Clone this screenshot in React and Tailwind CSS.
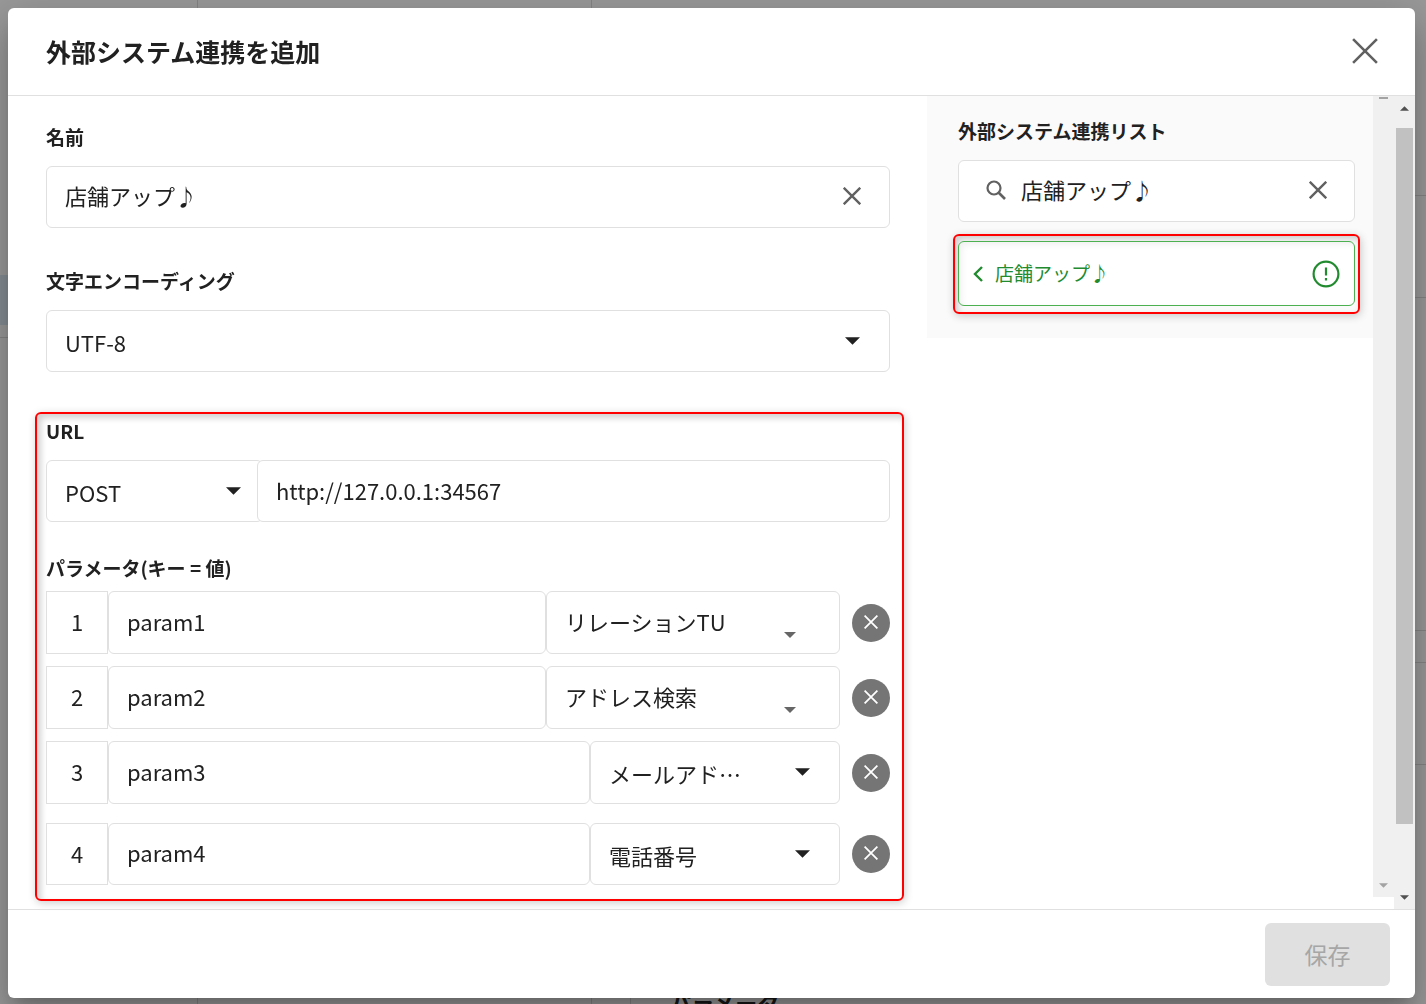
import { useState } from 'react';

const fieldClass =
  'h-[62px] w-full rounded-md border border-[#e0e0e0] bg-white px-[18px] text-[22px] text-[#212121] outline-none';

const initialParams = [
  { id: 1, name: 'param1', value: 'リレーションTU', wide: true },
  { id: 2, name: 'param2', value: 'アドレス検索', wide: true },
  { id: 3, name: 'param3', value: 'メールアド…', wide: false },
  { id: 4, name: 'param4', value: '電話番号', wide: false },
];

function CrossIcon({ className, strokeWidth = 2 }) {
  return (
    <svg viewBox="0 0 24 24" className={className} fill="none" stroke="currentColor" strokeWidth={strokeWidth}>
      <path d="M1 1L23 23M23 1L1 23" />
    </svg>
  );
}

function Caret({ className }) {
  return (
    <svg viewBox="0 0 14 7" className={className} fill="currentColor">
      <path d="M0 0H14L7 7Z" />
    </svg>
  );
}

function Label({ htmlFor, children }) {
  return (
    <label htmlFor={htmlFor} className="block text-[19px] leading-[26px] font-bold">
      {children}
    </label>
  );
}

function Backdrop() {
  return (
    <div className="fixed inset-0 overflow-hidden bg-[#999]" aria-hidden="true">
      <div className="absolute inset-y-0 left-[197px] w-px bg-[#848484]" />
      <div className="absolute inset-y-0 left-[591px] w-px bg-[#848484]" />
      <div className="absolute bottom-0 left-[630px] h-2 w-px bg-[#848484]" />
      <div className="absolute top-[275px] left-0 h-[50px] w-2 bg-[#858e94]" />
      <div className="absolute top-[337px] left-0 h-px w-2 bg-[#848484]" />
      <div className="absolute top-[195px] right-0 h-px w-3 bg-[#848484]" />
      <div className="absolute top-[297px] right-0 h-px w-3 bg-[#848484]" />
      <div className="absolute top-[630px] right-0 h-px w-3 bg-[#848484]" />
      <div className="absolute top-[662px] right-0 h-px w-3 bg-[#848484]" />
      <div className="absolute top-[764px] right-0 h-px w-3 bg-[#848484]" />
      <p className="absolute -bottom-3.5 left-[670px] text-[22px] leading-8 font-bold text-[#161616]">パラメータ</p>
    </div>
  );
}

function ParamRow({ param, onChange }) {
  const last = param.id === 4;
  return (
    <div className={`flex items-center ${last ? 'mt-[19px] h-[62px]' : 'h-[63px]'}`}>
      <div className="flex h-full w-[62px] shrink-0 items-center justify-center border border-[#e0e0e0] pb-0.5 text-[22px]">
        {param.id}
      </div>
      <input
        type="text"
        aria-label={`キー ${param.id}`}
        value={param.name}
        onChange={(e) => onChange(param.id, e.target.value)}
        className="h-full min-w-0 flex-1 rounded-md border border-[#e0e0e0] px-[18px] pb-1 text-[22px] outline-none"
      />
      <div className={`relative h-full shrink-0 ${param.wide ? 'w-[294px]' : 'w-[250px]'}`}>
        <select
          aria-label={`値 ${param.id}`}
          className={`h-full w-full appearance-none rounded-md border border-[#e0e0e0] bg-white px-[18px] text-[22px] outline-none ${param.wide ? 'pb-0.5' : 'pt-0.5'}`}
        >
          <option>{param.value}</option>
        </select>
        {param.wide ? (
          <Caret className="pointer-events-none absolute right-11 bottom-4 h-1.5 w-3 text-[#666]" />
        ) : (
          <Caret className="pointer-events-none absolute top-[27px] right-[30px] h-[8px] w-[15px]" />
        )}
      </div>
      <button
        type="button"
        aria-label="削除"
        className="ml-3 flex size-[38px] shrink-0 items-center justify-center rounded-full bg-[#757575] pb-0.5 text-white"
      >
        <CrossIcon className="size-3.5" strokeWidth={3} />
      </button>
    </div>
  );
}

function ScrollTrack({ children, className }) {
  return <div className={`w-[21px] shrink-0 bg-[#f0f0f0] ${className}`}>{children}</div>;
}

export default function App() {
  const [name, setName] = useState('店舗アップ♪');
  const [url, setUrl] = useState('http://127.0.0.1:34567');
  const [search, setSearch] = useState('店舗アップ♪');
  const [params, setParams] = useState(initialParams);

  const handleParamChange = (id, value) => {
    setParams(params.map((p) => (p.id === id ? { ...p, name: value } : p)));
  };

  return (
    <div className="font-['Noto_Sans_CJK_JP',sans-serif] text-[#212121]">
      <Backdrop />
      <div className="relative flex min-h-screen pt-2 pr-[11px] pb-1.5 pl-2">
        <div
          role="dialog"
          aria-labelledby="dialog-title"
          className="flex flex-1 flex-col rounded-md bg-white shadow-[0_11px_15px_-7px_rgba(0,0,0,0.2),0_24px_38px_3px_rgba(0,0,0,0.14),0_9px_46px_8px_rgba(0,0,0,0.12)]"
        >
          <header className="flex h-[88px] items-center justify-between border-b border-[#e0e0e0] pr-[37px] pl-[38px]">
            <h1 id="dialog-title" className="text-[25px] font-bold">
              外部システム連携を追加
            </h1>
            <button type="button" aria-label="閉じる" className="pb-0.5 text-[#616161]">
              <CrossIcon className="size-[26px]" strokeWidth={2.4} />
            </button>
          </header>

          <div className="flex flex-1">
            <main className="min-w-0 flex-1 pt-7 pr-[23px] pb-2 pl-[27px]">
              <div className="pr-3.5 pl-[11px]">
                <Label htmlFor="name">名前</Label>
                <div className="relative mt-4">
                  <input
                    id="name"
                    type="text"
                    value={name}
                    onChange={(e) => setName(e.target.value)}
                    className={`${fieldClass} pb-1`}
                  />
                  <button
                    type="button"
                    aria-label="クリア"
                    onClick={() => setName('')}
                    className="absolute top-[21px] right-[29px] text-[#616161]"
                  >
                    <CrossIcon className="size-[18px]" strokeWidth={3.2} />
                  </button>
                </div>
              </div>

              <div className="mt-10 pr-3.5 pl-[11px]">
                <Label htmlFor="encoding">文字エンコーディング</Label>
                <div className="relative mt-4">
                  <select id="encoding" className={`${fieldClass} appearance-none pt-0.5`}>
                    <option>UTF-8</option>
                  </select>
                  <Caret className="pointer-events-none absolute top-[27px] right-[30px] h-[8px] w-[15px]" />
                </div>
              </div>

              <section className="mt-10 rounded-md border-2 border-[#fe0000] pt-1 pr-3 pb-3.5 pl-[9px] shadow-[1px_2px_8px_rgba(0,0,0,0.2),inset_4px_4px_6px_rgba(0,0,0,0.18)]">
                <Label htmlFor="url">URL</Label>
                <div className="mt-4 flex">
                  <div className="relative -mr-1.5 w-[217px] shrink-0">
                    <select aria-label="メソッド" className={`${fieldClass} appearance-none pt-0.5`}>
                      <option>POST</option>
                    </select>
                    <Caret className="pointer-events-none absolute top-[27px] right-[22px] h-[8px] w-[15px]" />
                  </div>
                  <input
                    id="url"
                    type="text"
                    value={url}
                    onChange={(e) => setUrl(e.target.value)}
                    className={`${fieldClass} relative min-w-0 flex-1 pb-0.5`}
                  />
                </div>

                <h2 className="mt-[33px] text-[19px] leading-[26px] font-bold">パラメータ(キー = 値)</h2>
                <div className="mt-2.5 flex flex-col">
                  {params.map((param) => (
                    <div key={param.id} className="not-first:mt-3 last:mt-0">
                      <ParamRow param={param} onChange={handleParamChange} />
                    </div>
                  ))}
                </div>
              </section>
            </main>

            <aside className="w-[446px] shrink-0">
              <div className="bg-[#fafafa] pt-[22px] pr-[18px] pb-6 pl-[31px]">
                <Label htmlFor="search">外部システム連携リスト</Label>
                <div className="mt-4 flex h-[62px] items-center rounded-md border border-[#e0e0e0] bg-white pr-[27px] pb-0.5 pl-[27px]">
                  <svg viewBox="0 0 20 20" className="size-5 shrink-0 text-[#616161]" fill="none" stroke="currentColor">
                    <circle cx="8" cy="8" r="6.5" strokeWidth="2.2" />
                    <path d="M12.5 12.5L19 19" strokeWidth="2.6" />
                  </svg>
                  <input
                    id="search"
                    type="text"
                    value={search}
                    onChange={(e) => setSearch(e.target.value)}
                    className="ml-[15px] min-w-0 flex-1 pb-0.5 text-[22px] outline-none"
                  />
                  <button type="button" aria-label="クリア" onClick={() => setSearch('')} className="text-[#616161]">
                    <CrossIcon className="size-[18px]" strokeWidth={3.2} />
                  </button>
                </div>

                <div className="-mx-[5px] mt-3 rounded-md border-2 border-[#fe0000] px-[3px] pt-[5px] pb-1.5 shadow-[1px_2px_8px_rgba(0,0,0,0.2),inset_3px_3px_6px_rgba(0,0,0,0.18)]">
                  <button
                    type="button"
                    className="flex h-[65px] w-full items-center rounded-md border border-[#4caf50] bg-white pr-3.5 pl-3.5 text-[#228b30] shadow-[inset_3px_3px_6px_rgba(0,0,0,0.06)]"
                  >
                    <svg viewBox="0 0 10 16" className="h-4 w-2.5" fill="none" stroke="currentColor" strokeWidth="2.4">
                      <path d="M9 1L2 8L9 15" />
                    </svg>
                    <span className="ml-3 flex-1 text-left text-[19px]">店舗アップ♪</span>
                    <svg viewBox="0 0 28 28" className="size-7" fill="none" stroke="currentColor" strokeWidth="2.2">
                      <circle cx="14" cy="14" r="12.4" />
                      <path d="M14 7.5V15.5M14 18V20.6" />
                    </svg>
                  </button>
                </div>
              </div>
            </aside>

            <ScrollTrack className="mb-3 flex flex-col justify-between pt-px pb-[9px]">
              <div className="ml-1.5 h-0.5 w-[9px] bg-[#a3a3a3]" />
              <Caret className="ml-1.5 h-[5px] w-[9px] text-[#a3a3a3]" />
            </ScrollTrack>
            <ScrollTrack className="flex flex-col pt-2.5 pb-[9px]">
              <Caret className="ml-1.5 h-[5px] w-[9px] rotate-180 text-[#505050]" />
              <div className="mt-[17px] mr-0.5 mb-[71px] ml-0.5 flex-1 bg-[#c1c1c1]" />
              <Caret className="ml-1.5 h-[5px] w-[9px] text-[#505050]" />
            </ScrollTrack>
          </div>

          <footer className="flex h-[89px] items-center justify-end border-t border-[#e0e0e0] pr-[25px]">
            <button type="button" disabled className="h-[63px] w-[125px] rounded-md bg-[#e0e0e0] text-[23px] text-[#a6a6a6]">
              保存
            </button>
          </footer>
        </div>
      </div>
    </div>
  );
}
